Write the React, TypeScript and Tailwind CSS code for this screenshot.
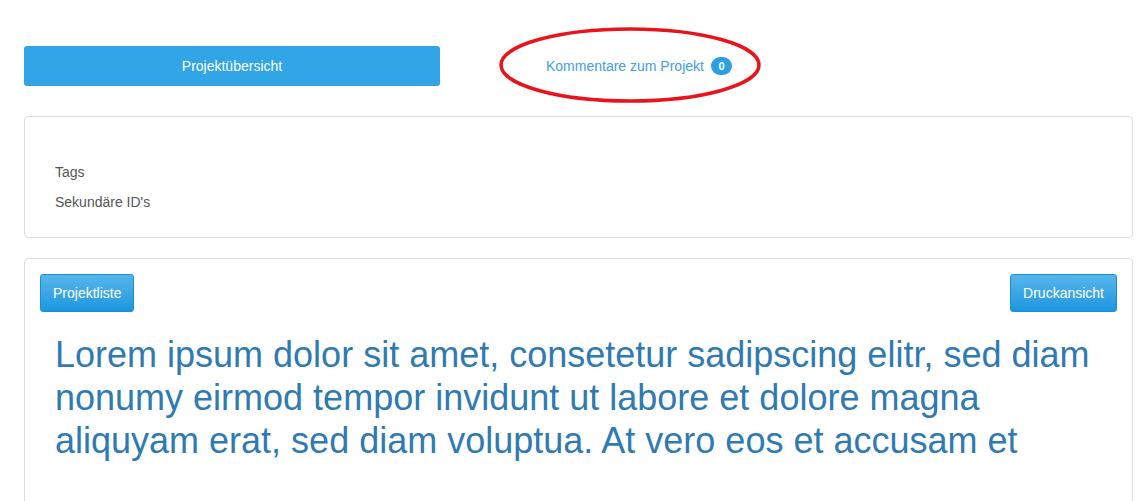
import React from 'react';

const font = { fontFamily: '"Liberation Sans", Arial, sans-serif' };

const App = () => {
  return (
    <div className="w-[1139px] h-[501px] overflow-hidden bg-white text-[14px] text-[#333]" style={font}>
      <div className="pl-6 pr-[6px] pt-[46px]">
        {/* header row */}
        <div className="flex items-center h-[40px]">
          <button className="w-[416px] h-[40px] rounded-[3px] bg-[#31a5e6] text-white text-[14px]">
            Projektübersicht
          </button>
          <div className="relative ml-[106px] flex items-center h-[18px]">
            <a className="text-[#3ea0e4] text-[14px] leading-none">Kommentare zum Projekt</a>
            <span className="ml-[7px] inline-flex items-center justify-center h-[18px] min-w-[21px] px-[6px] rounded-full bg-[#2e9fe2] text-white text-[11px] font-bold">
              0
            </span>
            {/* red marker ellipse */}
            <svg className="absolute left-[-47px] top-[-30px]" width="262" height="76" viewBox="0 0 262 76">
              <ellipse cx="131" cy="38" rx="129" ry="36" fill="none" stroke="#e8141c" strokeWidth="3.5" />
            </svg>
          </div>
        </div>

        {/* info panel */}
        <div className="mt-[30px] h-[122px] border border-[#dcdcdc] rounded-[4px] pl-[30px] pt-[46px] text-[#555]">
          <div className="leading-[18px]">Tags</div>
          <div className="mt-[12px] leading-[18px]">Sekundäre ID's</div>
        </div>

        {/* main panel */}
        <div className="mt-[20px] h-[300px] border border-[#dcdcdc] rounded-[4px] px-[15px] pt-[15px]">
          <div className="flex justify-between">
            <button className="h-[38px] px-[12px] rounded-[3px] border border-[#1b8fd6] bg-gradient-to-b from-[#55b6ec] to-[#1a96df] text-white text-[14px]">
              Projektliste
            </button>
            <button className="h-[38px] px-[12px] rounded-[3px] border border-[#1b8fd6] bg-gradient-to-b from-[#55b6ec] to-[#1a96df] text-white text-[14px]">
              Druckansicht
            </button>
          </div>
          <h1 className="mt-[21px] px-[15px] text-[36px] leading-[43px] text-[#2f7ab3] font-normal">
            Lorem ipsum dolor sit amet, consetetur sadipscing elitr, sed diam nonumy eirmod tempor invidunt ut labore et dolore magna aliquyam erat, sed diam voluptua. At vero eos et accusam et
          </h1>
        </div>
      </div>
    </div>
  );
};

export default App;
